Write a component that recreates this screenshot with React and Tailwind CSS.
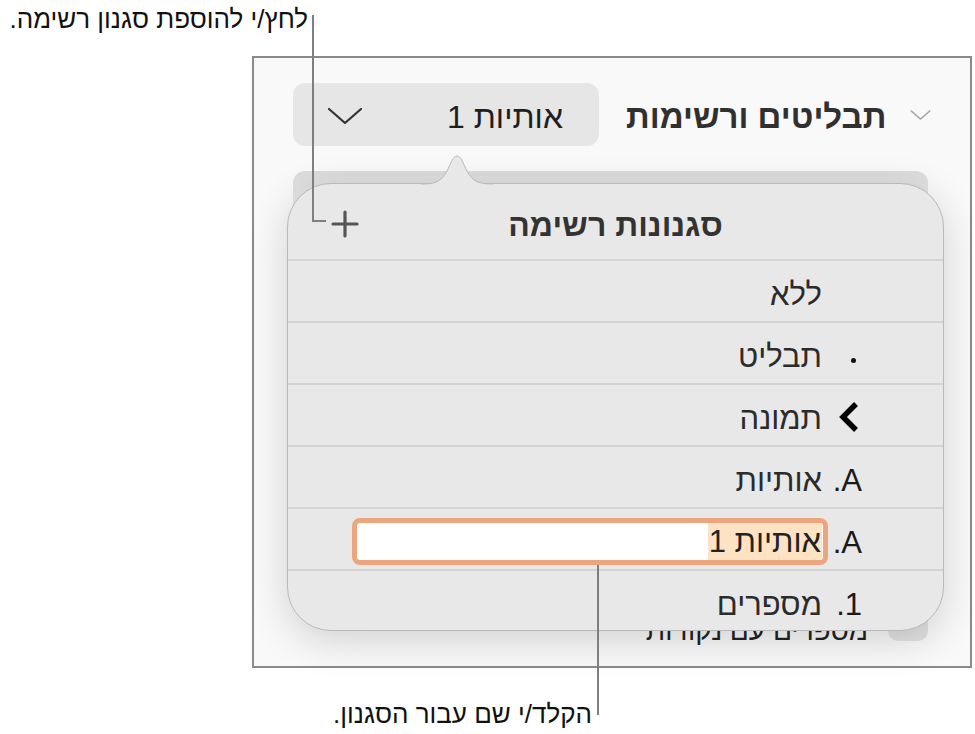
import React from "react";

const font = "font-['Liberation_Sans','DejaVu_Sans',sans-serif]";

const ChevronDown = ({ className, strokeWidth = 2.2 }) => (
  <svg viewBox="0 0 36 20" className={className} fill="none">
    <polyline points="2,3 18,17 34,3" stroke="currentColor" strokeWidth={strokeWidth} strokeLinecap="round" strokeLinejoin="round" />
  </svg>
);

const Row = ({ marker, children }) => (
  <div className="h-[62px] border-t-2 border-[#d3d3d3] flex items-center justify-end pr-[81px]">
    {children}
    <div className="w-[40px] flex justify-end items-center">{marker}</div>
  </div>
);

const Label = ({ children }) => (
  <span dir="rtl" className="text-[31px] leading-none text-[#2b2b2b] mt-[6px]">
    {children}
  </span>
);

const Marker = ({ children }) => (
  <span dir="rtl" className="text-[31px] leading-none text-[#1a1a1a] mt-[6px]">
    {children}
  </span>
);

function ListStylesPopover() {
  return (
    <div className="absolute left-[33px] top-[125px] w-[657px] h-[448px]">
      {/* arrow nub pointing at the style button */}
      <svg viewBox="0 0 72 30" className="absolute left-[134px] top-[-28px] w-[72px] h-[30px] z-10">
        <path d="M0,29 C14,29 20,27 26,16 C30,8 32,1 36,1 C40,1 42,8 46,16 C52,27 58,29 72,29 L72,30 L0,30 Z" fill="#e8e8e8" />
        <path d="M0,29 C14,29 20,27 26,16 C30,8 32,1 36,1 C40,1 42,8 46,16 C52,27 58,29 72,29" fill="none" stroke="#b9b9b9" strokeWidth="1" />
      </svg>
      <div className="w-full h-full rounded-[44px] border border-[#b9b9b9] bg-[#e8e8e8] shadow-[0_10px_40px_rgba(0,0,0,0.16)] overflow-hidden">
        <div className="relative h-[75px] flex items-center justify-center">
          <svg viewBox="0 0 28 28" className="absolute left-[43px] top-[26px] w-[28px] h-[28px]">
            <path d="M14 2v24M2 14h24" stroke="#555" strokeWidth="3.2" strokeLinecap="round" />
          </svg>
          <span dir="rtl" className="text-[32px] font-bold text-[#333] leading-none mt-[6px]">סגנונות רשימה</span>
        </div>
        <Row>
          <Label>ללא</Label>
        </Row>
        <Row marker={<span className="block w-[5px] h-[5px] rounded-full bg-[#111] mr-[6px] mt-[14px]" />}>
          <Label>תבליט</Label>
        </Row>
        <Row
          marker={
            <svg viewBox="0 0 22 32" className="w-[22px] h-[32px] mr-[2px] mt-[4px]">
              <polyline points="18,3 5,16 18,29" fill="none" stroke="#000" strokeWidth="5.5" strokeLinejoin="miter" />
            </svg>
          }
        >
          <Label>תמונה</Label>
        </Row>
        <Row marker={<Marker>A.</Marker>}>
          <Label>אותיות</Label>
        </Row>
        <Row marker={<Marker>A.</Marker>}>
          <div className="w-[476px] h-[47px] rounded-[8px] border-[5px] border-[#eda57d] bg-white flex justify-end items-center pr-[1px] mr-[-6px] mt-[4px]">
            <span dir="rtl" className="text-[31px] leading-[37px] text-[#222] bg-[#fde3c3] px-[1px]">
              אותיות 1
            </span>
          </div>
        </Row>
        <Row marker={<Marker>1.</Marker>}>
          <Label>מספרים</Label>
        </Row>
      </div>
    </div>
  );
}

export default function App() {
  return (
    <div className={`relative w-[975px] h-[734px] bg-white overflow-hidden ${font}`}>
      <p dir="rtl" className="absolute right-[667px] top-[3px] text-[26px] leading-[32px] text-[#111] whitespace-nowrap">
        לחץ/י להוספת סגנון רשימה.
      </p>

      {/* inspector panel */}
      <div className="relative ml-[252px] mt-[56px] w-[720px] h-[612px] border-2 border-[#8a8a8a] bg-[#f9f9f9]">
        <div className="flex items-center pt-[25px] pl-[39px]">
          <button className="w-[306px] h-[63px] rounded-[12px] bg-[#e6e6e6] flex items-center justify-between pl-[34px] pr-[36px]">
            <ChevronDown className="w-[36px] h-[20px] text-[#333] mt-[3px]" />
            <span dir="rtl" className="text-[32px] leading-none text-[#1e1e1e] mt-[4px]">אותיות 1</span>
          </button>
          <span dir="rtl" className="ml-[27px] text-[33px] font-bold leading-none text-[#303030] mt-[4px]">תבליטים ורשימות</span>
          <ChevronDown className="ml-[24px] w-[21px] h-[12px] text-[#a8a8a8]" strokeWidth={2.5} />
        </div>

        <div className="mt-[25px] ml-[39px] w-[635px] h-[470px] flex flex-col">
          <div className="h-[40px] rounded-t-[12px] bg-gradient-to-b from-[#dcdcdc] to-[#e6e6e6]" />
          <div className="flex-1" />
          <div className="flex items-end justify-end gap-[20px]">
            <span dir="rtl" className="text-[28px] leading-none text-[#222] mb-[-4px]">מספרים עם נקודות</span>
            <div className="w-[40px] h-[50px] rounded-b-[10px] rounded-t-[4px] bg-[#e2e2e2]" />
          </div>
        </div>

        <ListStylesPopover />
      </div>

      {/* callout lines */}
      <div className="absolute left-[312px] top-[15px] w-[2px] h-[207px] bg-[#7f7f7f] z-20" />
      <div className="absolute left-[312px] top-[220px] w-[14px] h-[2px] bg-[#7f7f7f] z-20" />
      <div className="absolute left-[597px] top-[565px] w-[2px] h-[150px] bg-[#7f7f7f] z-20" />

      <p dir="rtl" className="absolute right-[383px] top-[698px] text-[26px] leading-[32px] text-[#111] whitespace-nowrap">
        הקלד/י שם עבור הסגנון.
      </p>
    </div>
  );
}
